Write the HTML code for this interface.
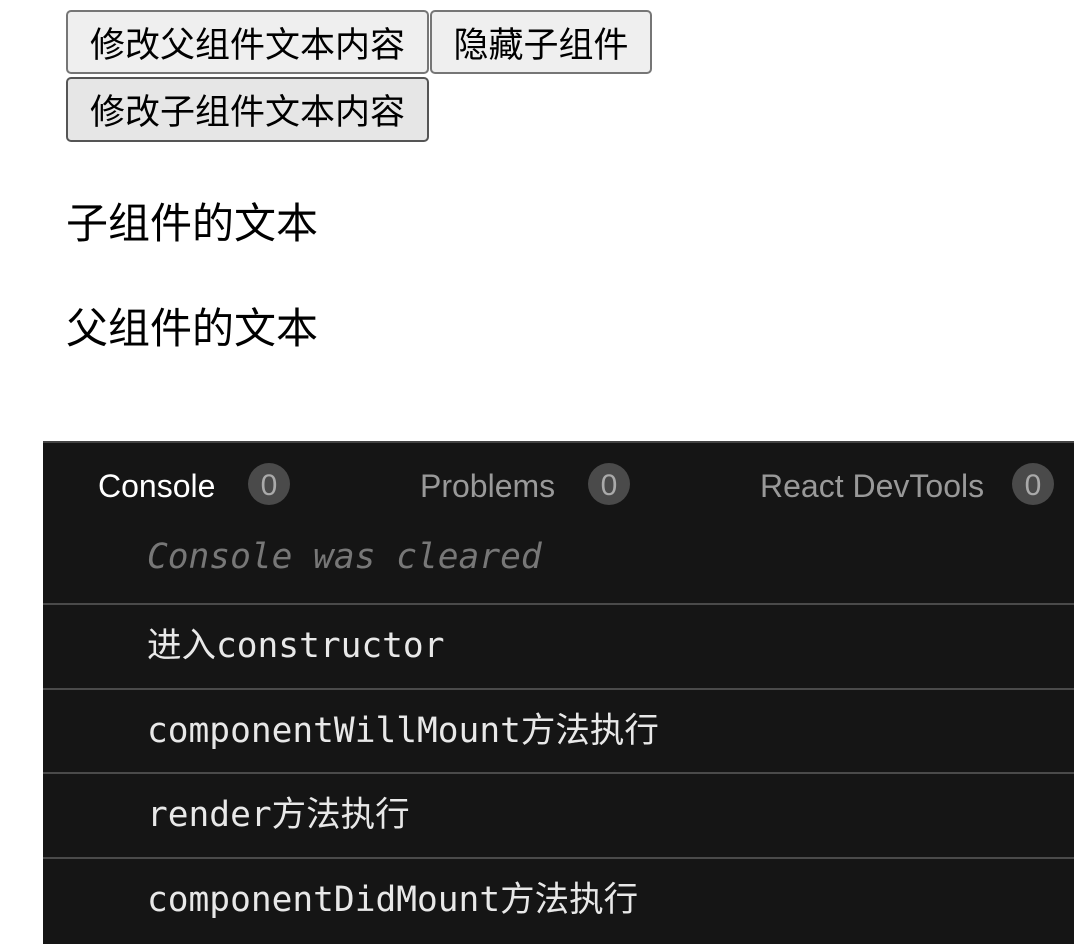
<!DOCTYPE html>
<html><head><meta charset="utf-8"><style>
body{margin:0;background:#fff;width:1074px;height:944px;overflow:hidden;position:relative;font-family:"Liberation Sans","Noto Sans CJK SC",sans-serif}
.btn{position:absolute;background:#efefef;border:2px solid #767676;border-radius:5px;box-sizing:border-box;font-size:35px;color:#000;display:flex;align-items:center;justify-content:center}
.t{position:absolute;left:66px;font-size:42px;color:#000}
.panel{position:absolute;left:43px;top:441px;right:0;bottom:0;background:#151515;border-top:2px solid #444}
.tab{position:absolute;top:22px;font-size:32px;color:#999;font-family:"Liberation Sans",sans-serif;display:flex;align-items:center;height:42px;white-space:nowrap}
.b{position:absolute;width:42px;height:42px;border-radius:21px;background:#4a4a4a;color:#aaa;text-align:center;line-height:46px;font-size:30px}
.row{position:absolute;left:0;right:0;height:84px;border-top:2px solid #4a4a4a;box-sizing:border-box;padding-left:104px;font-family:"DejaVu Sans Mono","Noto Sans CJK SC",monospace;font-size:34.5px;color:#e8e8e8;line-height:82px;white-space:nowrap}
</style></head><body>
<div class="btn" style="left:66px;top:10px;width:363px;height:64px">修改父组件文本内容</div>
<div class="btn" style="left:430px;top:10px;width:222px;height:64px">隐藏子组件</div>
<div class="btn" style="left:66px;top:77px;width:363px;height:65px;background:#e6e6e6;border-color:#555">修改子组件文本内容</div>
<div class="t" style="top:190px">子组件的文本</div>
<div class="t" style="top:295px">父组件的文本</div>
<div class="panel">
<div class="tab" style="left:55px;color:#fff">Console</div><div class="b" style="left:205px;top:20px">0</div>
<div class="tab" style="left:377px">Problems</div><div class="b" style="left:545px;top:20px">0</div>
<div class="tab" style="left:717px">React DevTools</div><div class="b" style="left:969px;top:20px">0</div>
<div style="position:absolute;left:104px;top:94px;font-family:'DejaVu Sans Mono',monospace;font-style:italic;font-size:34.5px;color:#777">Console was cleared</div>
<div class="row" style="top:160px">进入constructor</div>
<div class="row" style="top:245px">componentWillMount方法执行</div>
<div class="row" style="top:329px">render方法执行</div>
<div class="row" style="top:414px">componentDidMount方法执行</div>
</div>
</body></html>
